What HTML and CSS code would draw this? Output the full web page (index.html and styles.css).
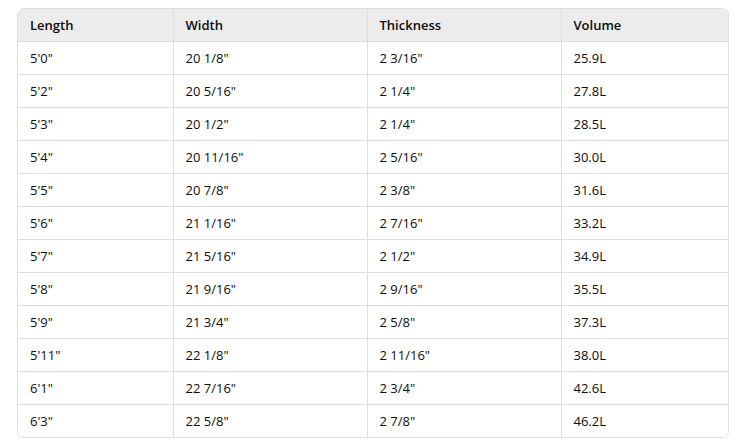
FILE: index.html
```html
<!DOCTYPE html>
<html>
<head>
<meta charset="utf-8">
<link rel="stylesheet" href="styles.css">
</head>
<body>
<div class="wrap">
<table class="tbl">
<colgroup><col class="c1"><col class="c2"><col class="c3"><col class="c4"></colgroup>
<thead>
<tr><th>Length</th><th>Width</th><th>Thickness</th><th>Volume</th></tr>
</thead>
<tbody>
<tr><td>5'0"</td><td>20 1/8"</td><td>2 3/16"</td><td>25.9L</td></tr>
<tr><td>5'2"</td><td>20 5/16"</td><td>2 1/4"</td><td>27.8L</td></tr>
<tr><td>5'3"</td><td>20 1/2"</td><td>2 1/4"</td><td>28.5L</td></tr>
<tr><td>5'4"</td><td>20 11/16"</td><td>2 5/16"</td><td>30.0L</td></tr>
<tr><td>5'5"</td><td>20 7/8"</td><td>2 3/8"</td><td>31.6L</td></tr>
<tr><td>5'6"</td><td>21 1/16"</td><td>2 7/16"</td><td>33.2L</td></tr>
<tr><td>5'7"</td><td>21 5/16"</td><td>2 1/2"</td><td>34.9L</td></tr>
<tr><td>5'8"</td><td>21 9/16"</td><td>2 9/16"</td><td>35.5L</td></tr>
<tr><td>5'9"</td><td>21 3/4"</td><td>2 5/8"</td><td>37.3L</td></tr>
<tr><td>5'11"</td><td>22 1/8"</td><td>2 11/16"</td><td>38.0L</td></tr>
<tr><td>6'1"</td><td>22 7/16"</td><td>2 3/4"</td><td>42.6L</td></tr>
<tr><td>6'3"</td><td>22 5/8"</td><td>2 7/8"</td><td>46.2L</td></tr>
</tbody>
</table>
</div>
</body>
</html>
```
FILE: styles.css
```css
html, body {
  margin: 0;
  padding: 0;
  background: #ffffff;
}
body {
  padding: 8px 17px 0 17px;
  font-family: "Open Sans", "Noto Sans", sans-serif;
  color: #0d0d0d;
}
.wrap {
  width: 712px;
  border: 1px solid #dedede;
  border-radius: 7px;
  overflow: hidden;
  box-sizing: border-box;
}
.tbl {
  width: 710px;
  border-collapse: collapse;
  table-layout: fixed;
  font-size: 13px;
}
.c1 { width: 155px; }
.c2 { width: 194px; }
.c3 { width: 194px; }
.c4 { width: 167px; }
.tbl th, .tbl td {
  height: 33px;
  padding: 0 12px;
  text-align: left;
  vertical-align: middle;
  border-left: 1px solid #dedede;
  border-top: 1px solid #dedede;
  box-sizing: border-box;
  white-space: nowrap;
}
.tbl th:first-child, .tbl td:first-child { border-left: none; }
.tbl thead th {
  border-top: none;
  background: #ececec;
  font-weight: 600;
  height: 32px;
}
```
